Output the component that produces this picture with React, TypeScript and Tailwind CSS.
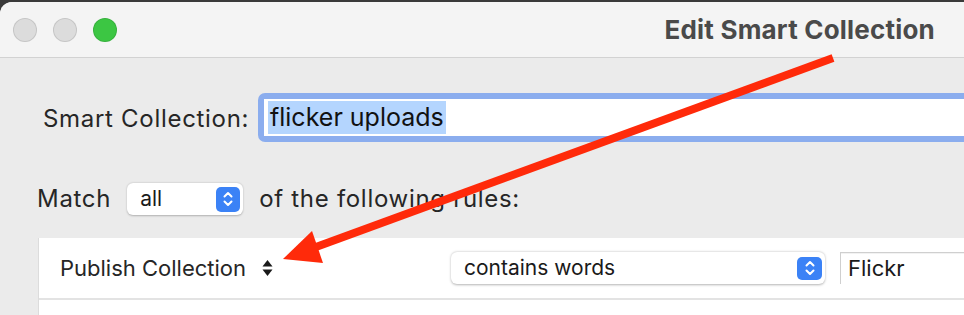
import React from 'react';

const font = { fontFamily: 'Inter, "Liberation Sans", sans-serif' };

function Stepper({ className }: { className: string }) {
  return (
    <div className={`flex items-center justify-center rounded-[5px] bg-[#3b82f6] ${className}`}>
      <svg width="12" height="18" viewBox="0 0 12 18" fill="none" stroke="white" strokeWidth="2" strokeLinecap="round" strokeLinejoin="round">
        <path d="M2.5 6.5 L6 3 L9.5 6.5" />
        <path d="M2.5 11.5 L6 15 L9.5 11.5" />
      </svg>
    </div>
  );
}

function Light({ color }: { color: string }) {
  return <div className={`h-[24px] w-[24px] rounded-full border border-black/10 ${color}`} />;
}

export default function App() {
  return (
    <div className="relative h-[315px] w-[964px] overflow-hidden bg-[#3a3a3a]" style={font}>
      <div className="mt-[2px] h-[313px] overflow-hidden rounded-tl-[12px] bg-[#ebebeb]">
        {/* title bar */}
        <div className="flex h-[56px] items-center border-b border-[#d2d2d2] bg-[#f4f4f4] pl-[13px]">
          <div className="flex gap-[16px]">
            <Light color="bg-[#dcdcdc]" />
            <Light color="bg-[#dcdcdc]" />
            <Light color="bg-[#3cc643]" />
          </div>
          <div className="ml-auto mr-[29px] text-[26px] font-bold tracking-[0.2px] text-[#4a4a4a]">Edit Smart Collection</div>
        </div>

        {/* name row */}
        <div className="flex items-center pl-[43px] pt-[35px]">
          <span className="mt-[2px] w-[215px] text-[24px] tracking-[0.7px] text-[#262626]">Smart Collection:</span>
          <div className="flex-1 rounded-l-[7px] bg-[#8badee] py-[6px] pl-[6px]">
            <div className="flex h-[37px] items-center bg-white pl-[4px]">
              <span className="bg-[#b4d5fe] px-[2px] text-[25px] leading-[33px] text-[#111]">flicker uploads</span>
            </div>
          </div>
        </div>

        {/* match row */}
        <div className="mt-[39px] flex items-center pl-[37px]">
          <span className="text-[24px] tracking-[0.7px] text-[#262626]">Match</span>
          <div className="ml-[16px] flex h-[32px] w-[116px] items-center justify-between rounded-[6px] bg-white pl-[13px] pr-[3px] shadow-[0_0.5px_2px_rgba(0,0,0,0.25)]">
            <span className="text-[21px] text-[#1a1a1a]">all</span>
            <Stepper className="h-[25px] w-[24px]" />
          </div>
          <span className="ml-[16px] text-[24px] tracking-[0.7px] text-[#262626]">of the following rules:</span>
        </div>

        {/* rules box */}
        <div className="ml-[38px] mt-[21px] border-l border-[#dcdcdc] bg-white">
          <div className="flex h-[62px] items-center border-b-[2px] border-[#e3e3e3] pl-[21px]">
            <span className="w-[200px] text-[22px] text-[#262626]">Publish Collection</span>
            <svg width="11" height="16" viewBox="0 0 11 16" className="ml-[2px]" fill="#1a1a1a">
              <path d="M5.5 0 L10.5 6.5 L0.5 6.5 Z" />
              <path d="M5.5 16 L10.5 9.5 L0.5 9.5 Z" />
            </svg>
            <div className="ml-[178px] flex h-[32px] w-[374px] items-center justify-between rounded-[6px] bg-white pl-[13px] pr-[3px] shadow-[0_0.5px_2.5px_rgba(0,0,0,0.3)]">
              <span className="text-[21px] text-[#1a1a1a]">contains words</span>
              <Stepper className="h-[23px] w-[25px]" />
            </div>
            <div className="ml-[15px] flex h-[32px] flex-1 items-center border-l border-t border-[#cfcfcf] bg-white pl-[7px] shadow-[inset_0_1px_0_rgba(0,0,0,0.05)]">
              <span className="text-[22px] text-[#1a1a1a]">Flickr</span>
            </div>
          </div>
          <div className="h-[20px]" />
        </div>
      </div>

      {/* annotation arrow */}
      <svg className="pointer-events-none absolute left-0 top-0" width="964" height="315">
        <line x1="833" y1="58" x2="305" y2="251" stroke="#ff2a0a" strokeWidth="8" />
        <polygon points="283,259 312,231 323,263" fill="#ff2a0a" />
      </svg>
    </div>
  );
}
